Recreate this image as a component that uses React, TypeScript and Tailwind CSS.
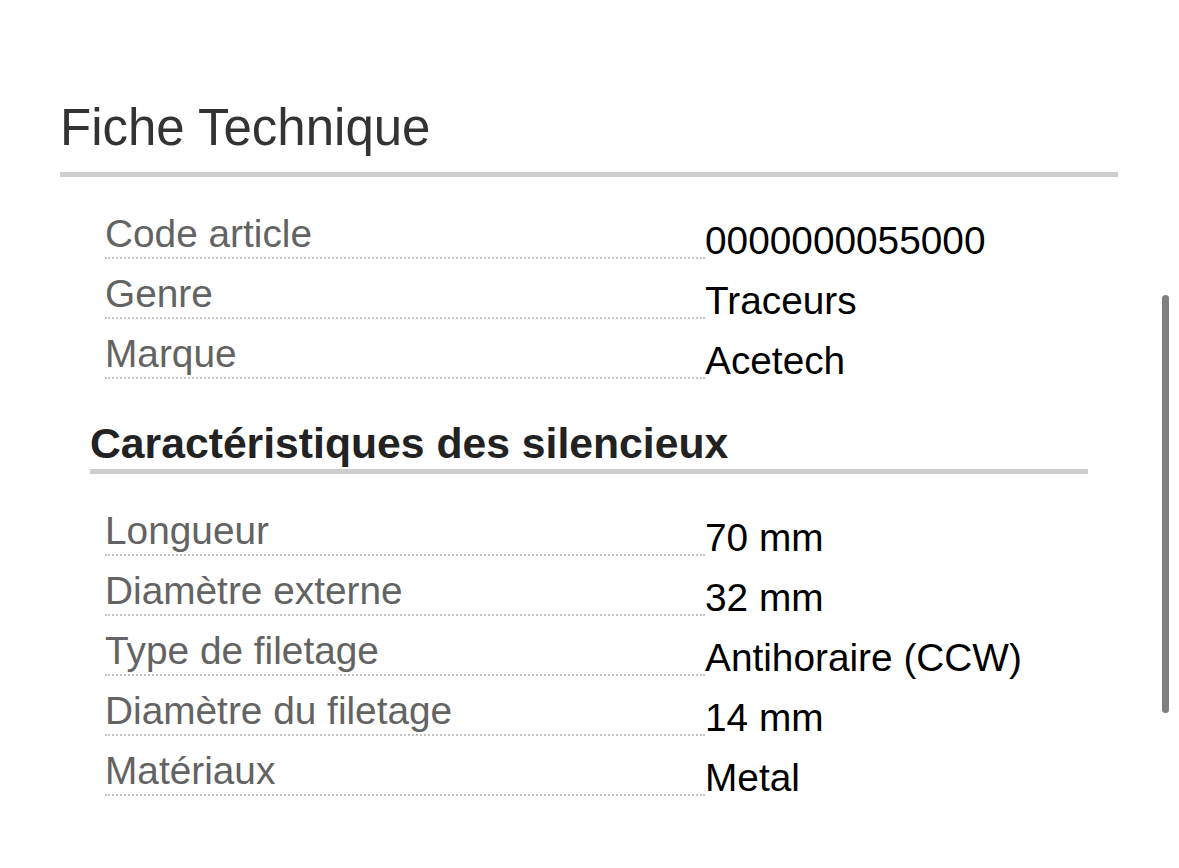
import React from 'react'

type Row = { label: string; value: string }

const GENERAL: Row[] = [
  { label: 'Code article', value: '0000000055000' },
  { label: 'Genre', value: 'Traceurs' },
  { label: 'Marque', value: 'Acetech' },
]

const SILENCER: Row[] = [
  { label: 'Longueur', value: '70 mm' },
  { label: 'Diamètre externe', value: '32 mm' },
  { label: 'Type de filetage', value: 'Antihoraire (CCW)' },
  { label: 'Diamètre du filetage', value: '14 mm' },
  { label: 'Matériaux', value: 'Metal' },
]

function SpecRows({ rows }: { rows: Row[] }) {
  return (
    <div className="grid grid-cols-[600px_1fr]">
      {rows.map(r => (
        <React.Fragment key={r.label}>
          <div className="h-[60px] flex items-end border-b-2 border-dotted border-[#c4c4c4]">
            <span className="text-[38.8px] leading-[44px] pb-[1px] text-[#636363]">{r.label}</span>
          </div>
          <div className="h-[60px] pt-[20px]">
            <span className="block text-[38.8px] leading-[44px] text-black whitespace-nowrap">{r.value}</span>
          </div>
        </React.Fragment>
      ))}
    </div>
  )
}

export default function App() {
  return (
    <div className="relative min-h-[868px] w-full bg-white font-['Liberation_Sans',Arial,sans-serif]">
      <div className="ml-[60px] w-[1058px] pt-[98px]">
        {/* Fiche technique */}
        <h2 className="text-[51px] leading-[60px] text-[#333333] pb-[14px] border-b-[5px] border-[#cdcdcd]">
          Fiche Technique
        </h2>

        <div className="mt-[22px] pl-[45px]">
          <SpecRows rows={GENERAL} />
        </div>

        {/* Caractéristiques */}
        <div className="px-[30px] mt-[40px]">
          <h3 className="text-[42.7px] font-bold leading-[48px] text-[#222222] pb-[2px] border-b-[5px] border-[#cdcdcd] whitespace-nowrap">
            Caractéristiques des silencieux
          </h3>
          <div className="mt-[22px] pl-[15px]">
            <SpecRows rows={SILENCER} />
          </div>
        </div>
      </div>

      {/* scroll indicator */}
      <div className="absolute left-[1162px] top-[295px] w-[7px] h-[418px] rounded-full bg-[#7f7f7f]" />
    </div>
  )
}
